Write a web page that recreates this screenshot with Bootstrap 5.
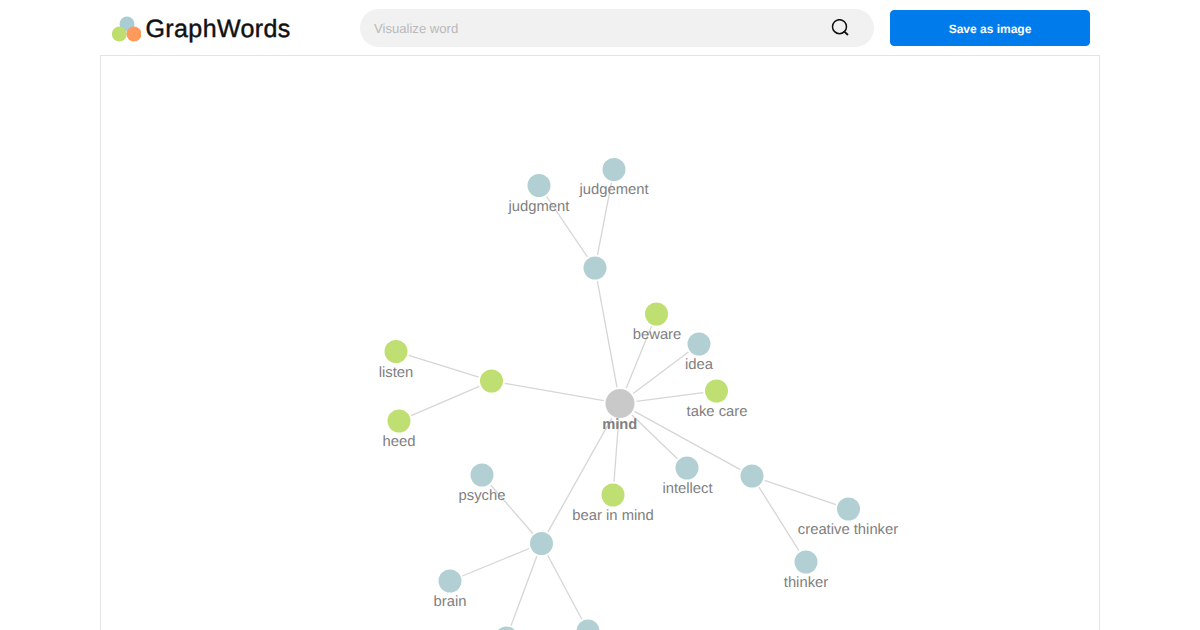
<!DOCTYPE html>
<html lang="en">
<head>
<meta charset="utf-8">
<title>GraphWords</title>
<link href="https://cdn.jsdelivr.net/npm/bootstrap@5.3.0/dist/css/bootstrap.min.css" rel="stylesheet">
<style>
html, body { height: 100%; overflow: hidden; background: #fff; font-family: "Liberation Sans", Arial, sans-serif; }
.gw-shell { width: 1000px; margin: 0 auto; }
.gw-head { height: 55px; }
.gw-brand { width: 260px; padding-left: 11px; gap: 4.5px; text-decoration: none; }
.gw-brand-name { font-size: 25px; line-height: 30px; padding-top: 2px; color: #111; font-weight: 400; -webkit-text-stroke: .45px #111; letter-spacing: .4px; text-rendering: geometricPrecision; }
.gw-search { width: 514px; height: 38px; background: #f1f1f1; padding: 2px 24px 0 14px; }
.gw-search-input { font-size: 13.1px; color: #555; background: transparent; border: 0; outline: 0; padding: 0; text-rendering: geometricPrecision; }
.gw-search-input::placeholder { color: #b9b9b9; opacity: 1; }
.gw-save { width: 200px; height: 36px; margin-left: 16px; font-size: 12px; font-weight: 700; background: #007bec; border-color: #007bec; border-radius: 4px; padding: 2px 0 0; text-rendering: geometricPrecision; }
.gw-canvas { height: 575px; border: 1px solid #e4e4e4; border-bottom: 0; overflow: hidden; }
.gw-canvas svg { display: block; }
.gw-edges line { stroke: #d6d6d6; stroke-width: 1.3; }
.gw-syn { fill: #b2d0d3; }
.gw-ant { fill: #c0df72; }
.gw-root { fill: #c9c9c9; }
.gw-labels text { font-family: "Liberation Sans", Arial, sans-serif; font-size: 14.8px; fill: #808080; text-anchor: middle; text-rendering: geometricPrecision; }
.gw-labels .gw-root-label { font-weight: 700; font-size: 14.7px; }
</style>
</head>
<body>
<div class="gw-shell">
  <header class="gw-head d-flex align-items-center">
    <a class="gw-brand d-flex align-items-center" href="#">
      <svg width="30" height="30" viewBox="0 0 30 30" aria-hidden="true">
        <circle cx="16" cy="11" r="7.5" fill="#a9cdd2"/>
        <circle cx="8.3" cy="21" r="7.5" fill="#bfde70"/>
        <circle cx="23" cy="21" r="7.5" fill="#ff9a5c"/>
      </svg>
      <span class="gw-brand-name">GraphWords</span>
    </a>
    <form class="gw-search d-flex align-items-center rounded-pill" onsubmit="return false">
      <input class="gw-search-input flex-grow-1" type="text" placeholder="Visualize word" aria-label="Visualize word">
      <svg width="20" height="20" viewBox="0 0 20 20" aria-hidden="true">
        <circle cx="9.5" cy="7.7" r="7" fill="none" stroke="#111" stroke-width="1.5"/>
        <line x1="14.3" y1="12.6" x2="17.5" y2="15.5" stroke="#111" stroke-width="1.8" stroke-linecap="round"/>
      </svg>
    </form>
    <button class="btn btn-primary gw-save" type="button">Save as image</button>
  </header>
  <main class="gw-canvas">
    <svg width="998" height="574" viewBox="101 56 998 574" role="img" aria-label="Word graph for mind">
      <g class="gw-edges">
        <line x1="617" y1="387.3" x2="597.4" y2="281.1"/>
        <line x1="587.5" y1="257" x2="546.5" y2="196.5"/>
        <line x1="597.5" y1="254.9" x2="611.5" y2="182.6"/>
        <line x1="603.7" y1="400.7" x2="504.6" y2="383.3"/>
        <line x1="478.8" y1="377.1" x2="408.7" y2="355.4"/>
        <line x1="479.3" y1="386.3" x2="411.2" y2="415.7"/>
        <line x1="626.2" y1="388.2" x2="651.5" y2="326.3"/>
        <line x1="633.2" y1="393.6" x2="688.4" y2="352"/>
        <line x1="636.4" y1="401.4" x2="703.3" y2="392.7"/>
        <line x1="631.9" y1="415" x2="677.4" y2="458.8"/>
        <line x1="618.7" y1="420" x2="614" y2="481.7"/>
        <line x1="634.5" y1="411.4" x2="740.3" y2="469.6"/>
        <line x1="764.6" y1="480.3" x2="835.9" y2="504.7"/>
        <line x1="759.1" y1="487.3" x2="798.9" y2="550.7"/>
        <line x1="611.9" y1="417.9" x2="548" y2="531.9"/>
        <line x1="532.8" y1="533.5" x2="490.7" y2="485"/>
        <line x1="529.2" y1="548.5" x2="462.3" y2="576"/>
        <line x1="536.9" y1="556" x2="511.1" y2="625.5"/>
        <line x1="547.7" y1="555.2" x2="581.8" y2="619.3"/>
      </g>
      <g>
        <circle class="gw-root" cx="620" cy="403.5" r="14.5"/>
        <circle class="gw-syn" cx="595" cy="268" r="11.5"/>
        <circle class="gw-syn" cx="539" cy="185.5" r="11.5"/>
        <circle class="gw-syn" cx="614" cy="169.5" r="11.5"/>
        <circle class="gw-ant" cx="491.5" cy="381" r="11.5"/>
        <circle class="gw-ant" cx="396" cy="351.5" r="11.5"/>
        <circle class="gw-ant" cx="399" cy="421" r="11.5"/>
        <circle class="gw-ant" cx="656.5" cy="314" r="11.5"/>
        <circle class="gw-syn" cx="699" cy="344" r="11.5"/>
        <circle class="gw-ant" cx="716.5" cy="391" r="11.5"/>
        <circle class="gw-syn" cx="687" cy="468" r="11.5"/>
        <circle class="gw-ant" cx="613" cy="495" r="11.5"/>
        <circle class="gw-syn" cx="752" cy="476" r="11.5"/>
        <circle class="gw-syn" cx="848.5" cy="509" r="11.5"/>
        <circle class="gw-syn" cx="806" cy="562" r="11.5"/>
        <circle class="gw-syn" cx="541.5" cy="543.5" r="11.5"/>
        <circle class="gw-syn" cx="482" cy="475" r="11.5"/>
        <circle class="gw-syn" cx="450" cy="581" r="11.5"/>
        <circle class="gw-syn" cx="506.5" cy="638" r="11.5"/>
        <circle class="gw-syn" cx="588" cy="631" r="11.5"/>
      </g>
      <g class="gw-labels">
        <text class="gw-root-label" x="619.7" y="429">mind</text>
        <text x="539" y="211">judgment</text>
        <text x="614" y="194">judgement</text>
        <text x="396" y="377">listen</text>
        <text x="399" y="446">heed</text>
        <text x="657" y="339">beware</text>
        <text x="699" y="369">idea</text>
        <text x="717" y="416">take care</text>
        <text x="687.5" y="493">intellect</text>
        <text x="613" y="520">bear in mind</text>
        <text x="848" y="534">creative thinker</text>
        <text x="806" y="587">thinker</text>
        <text x="482" y="500">psyche</text>
        <text x="450" y="606">brain</text>
      </g>
    </svg>
  </main>
</div>
<script src="https://cdn.jsdelivr.net/npm/bootstrap@5.3.0/dist/js/bootstrap.bundle.min.js"></script>
</body>
</html>
